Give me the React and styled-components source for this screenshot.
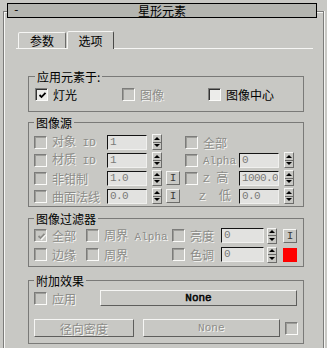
import React from "react";
import styled, { createGlobalStyle } from "styled-components";

const BG = "#c8c8c4";
const CJK = `"Noto Sans CJK SC", "Noto Sans", sans-serif`;
const MONO = `"Liberation Mono", "Noto Sans CJK SC", monospace`;
const LIGHT = "#f6f6f4";
const SHADE = "#6c6c6a";

const GlobalStyle = createGlobalStyle`
  html, body { margin: 0; padding: 0; background: ${BG}; }
  body { font-family: ${CJK}; font-size: 12px; color: #000; }
  * { box-sizing: border-box; }
`;

const Page = styled.div`
  width: 327px;
  height: 348px;
  overflow: hidden;
  background: ${BG};
  padding: 11px 0 0 3px;
`;

const Rollout = styled.div`
  width: 321px;
  height: 360px;
  border: 1px solid #7c7c7a;
  border-bottom: none;
  box-shadow: inset 1px 1px 0 ${LIGHT}, 1px 0 0 ${LIGHT};
`;

const TitleBar = styled.div`
  margin: -9px 0 0 3px;
  width: 310px;
  height: 15px;
  border: 1px solid #000;
  background: #b4b5b0;
  display: grid;
  grid-template-columns: 1fr auto 1fr;
  align-items: center;
  line-height: 13px;
`;

const Collapse = styled.span`
  padding-left: 5px;
  font-family: ${MONO};
  font-size: 11px;
`;

const TabStrip = styled.div`
  margin: 13px 0 0 12px;
  width: 297px;
  height: 18px;
  padding-left: 2px;
  display: flex;
  align-items: flex-end;
  gap: 1px;
  border-bottom: 1px solid ${LIGHT};
`;

const Tab = styled.div`
  width: ${(p) => p.$w}px;
  height: ${(p) => (p.$active ? 18 : 16)}px;
  margin-bottom: ${(p) => (p.$active ? -1 : 0)}px;
  background: ${BG};
  border: 1px solid;
  border-bottom: none;
  border-color: ${LIGHT} ${(p) => (p.$active ? "#4a4a48" : SHADE)} transparent ${LIGHT};
  border-radius: 2px 2px 0 0;
  display: flex;
  align-items: center;
  justify-content: center;
  line-height: 14px;
`;

const Group = styled.fieldset`
  margin: ${(p) => p.$mt}px 0 0 24px;
  width: 276px;
  min-width: 0;
  border: 1px solid #7a7a78;
  padding: ${(p) => p.$pad};
`;

const Caption = styled.legend`
  padding: 0 2px;
  line-height: 13px;
  font-size: 12px;
`;

const Row = styled.div`
  display: grid;
  grid-template-columns: ${(p) => p.$cols};
  height: ${(p) => p.$h}px;
  align-items: center;
  margin-top: ${(p) => p.$mt || 0}px;
`;

const FlexRow = styled.div`
  display: flex;
  align-items: center;
  height: ${(p) => p.$h}px;
  margin-top: ${(p) => p.$mt || 0}px;
`;

const Slot = styled.div`
  grid-column: ${(p) => p.$col};
  display: flex;
  align-items: center;
`;

const Item = styled.label`
  display: flex;
  align-items: center;
  gap: 5px;
  white-space: nowrap;
  padding-left: ${(p) => p.$indent || 0}px;
`;

const Text = styled.span`
  line-height: 13px;
  white-space: pre;
  color: ${(p) => (p.$off ? "#8c8c88" : "#000")};
  text-shadow: ${(p) => (p.$off ? `1px 1px 0 ${LIGHT}` : "none")};
`;

const Latin = styled.span`
  font-family: ${MONO};
  font-size: 11px;
  white-space: pre;
`;

const Box = styled.span`
  width: 13px;
  height: 13px;
  flex: none;
  display: inline-flex;
  align-items: center;
  justify-content: center;
  border: 1px solid;
  border-color: #7c7c7a #fbfbf9 #fbfbf9 #7c7c7a;
  box-shadow: inset 1px 1px 0 ${(p) => (p.$on ? "#333" : "#9c9c98")};
  background: ${(p) => (p.$on ? "#ececea" : BG)};
  margin-left: ${(p) => p.$ml || 0}px;
`;

const CheckBox = ({ on, checked, ml }) => (
  <Box $on={on} $ml={ml}>
    {checked && (
      <svg width="9" height="9" viewBox="0 0 9 9" style={{ marginLeft: 1, marginTop: 1 }}>
        {!on && <path d="M2 4.5 L4 6.5 L8 2" fill="none" stroke={LIGHT} strokeWidth="1.8" transform="translate(0.6 0.6)" />}
        <path d="M1.5 4 L3.5 6 L7.5 1.8" fill="none" stroke={on ? "#000" : "#8c8c88"} strokeWidth="1.8" />
      </svg>
    )}
  </Box>
);

const Field = styled.div`
  width: ${(p) => p.$w}px;
  height: 15px;
  border: 1px solid;
  border-color: #141414 #f0f0ee #f0f0ee #141414;
  background: #e2e2e0;
  font-family: ${MONO};
  font-size: 11px;
  letter-spacing: -0.6px;
  line-height: 13px;
  padding-left: 2px;
  color: #7a7a78;
  white-space: nowrap;
  overflow: hidden;
`;

const Spinner = styled.div`
  width: 10px;
  height: 16px;
  display: flex;
  flex-direction: column;
  border: 1px solid;
  border-color: ${LIGHT} ${SHADE} ${SHADE} ${LIGHT};
`;

const SpinHalf = styled.span`
  flex: 1;
  display: flex;
  align-items: center;
  justify-content: center;
  border-top: ${(p) => (p.$down ? `1px solid ${SHADE}` : "none")};
  &::after {
    content: "";
    border-left: 3px solid transparent;
    border-right: 3px solid transparent;
    ${(p) => (p.$down ? "border-top: 3px solid #000;" : "border-bottom: 3px solid #000;")}
  }
`;

const Spin = () => (
  <Spinner>
    <SpinHalf />
    <SpinHalf $down />
  </Spinner>
);

const IButton = styled.div`
  width: 14px;
  height: 14px;
  border: 1px solid;
  border-color: ${LIGHT} ${SHADE} ${SHADE} ${LIGHT};
  display: flex;
  align-items: center;
  justify-content: center;
  font-family: ${MONO};
  font-size: 11px;
  color: #3a3a3a;
`;

const Swatch = styled.div`
  width: 14px;
  height: 14px;
  background: #ff0000;
`;

const Button = styled.div`
  width: ${(p) => p.$w}px;
  height: ${(p) => p.$h}px;
  margin-left: ${(p) => p.$ml || 0}px;
  border: 1px solid;
  border-color: ${LIGHT} #5e5e5c #5e5e5c ${LIGHT};
  display: flex;
  align-items: center;
  justify-content: center;
  line-height: 13px;
  white-space: pre;
  color: ${(p) => (p.$off ? "#8c8c88" : "#000")};
  text-shadow: ${(p) => (p.$off ? `1px 1px 0 ${LIGHT}` : "none")};
`;

const ButtonLatin = styled(Latin)`
  -webkit-text-stroke: ${(p) => (p.$bold ? "0.5px #000" : "0")};
`;

const SRC_COLS = "73px 45px 14px 19px 54px 45px 10px";
const FLT_COLS = "52px 86px 49px 46px 16px 14px";

export default function App() {
  return (
    <>
      <GlobalStyle />
      <Page>
        <Rollout>
          <TitleBar>
            <Collapse>-</Collapse>
            <span>星形元素</span>
            <span />
          </TitleBar>

          <TabStrip>
            <Tab $w={48}>参数</Tab>
            <Tab $w={47} $active>选项</Tab>
          </TabStrip>

          <Group $mt={21} $pad="5px 6px 10px 6px">
            <Caption>应用元素于:</Caption>
            <Row $cols="87px 86px 1fr" $h={13}>
              <Item><CheckBox on checked /><Text>灯光</Text></Item>
              <Item><CheckBox /><Text $off>图像</Text></Item>
              <Item><CheckBox on /><Text>图像中心</Text></Item>
            </Row>
          </Group>

          <Group $mt={4} $pad="4px 5px 1px 5px">
            <Caption>图像源</Caption>
            <Row $cols={SRC_COLS} $h={18}>
              <Item><CheckBox /><Text $off>对象<Latin> ID</Latin></Text></Item>
              <Field $w={40}>1</Field>
              <Slot $col="3"><Spin /></Slot>
              <Slot $col="5"><Item><CheckBox /><Text $off>全部</Text></Item></Slot>
            </Row>
            <Row $cols={SRC_COLS} $h={18}>
              <Item><CheckBox /><Text $off>材质<Latin> ID</Latin></Text></Item>
              <Field $w={40}>1</Field>
              <Slot $col="3"><Spin /></Slot>
              <Slot $col="5"><Item><CheckBox /><Text $off><Latin>Alpha</Latin></Text></Item></Slot>
              <Slot $col="6"><Field $w={40}>0</Field></Slot>
              <Slot $col="7"><Spin /></Slot>
            </Row>
            <Row $cols={SRC_COLS} $h={18}>
              <Item><CheckBox /><Text $off>非钳制</Text></Item>
              <Field $w={40}>1.0</Field>
              <Slot $col="3"><Spin /></Slot>
              <Slot $col="4"><IButton>I</IButton></Slot>
              <Slot $col="5"><Item><CheckBox /><Text $off><Latin>Z </Latin>高</Text></Item></Slot>
              <Slot $col="6"><Field $w={40}>1000.0</Field></Slot>
              <Slot $col="7"><Spin /></Slot>
            </Row>
            <Row $cols={SRC_COLS} $h={18}>
              <Item><CheckBox /><Text $off>曲面法线</Text></Item>
              <Field $w={40}>0.0</Field>
              <Slot $col="3"><Spin /></Slot>
              <Slot $col="4"><IButton>I</IButton></Slot>
              <Slot $col="5"><Item $indent={14}><Text $off><Latin>Z  </Latin>低</Text></Item></Slot>
              <Slot $col="6"><Field $w={40}>0.0</Field></Slot>
              <Slot $col="7"><Spin /></Slot>
            </Row>
          </Group>

          <Group $mt={5} $pad="1px 5px 2px 5px">
            <Caption>图像过滤器</Caption>
            <Row $cols={FLT_COLS} $h={19}>
              <Item><CheckBox checked /><Text $off>全部</Text></Item>
              <Item><CheckBox /><Text $off>周界<Latin> Alpha</Latin></Text></Item>
              <Item><CheckBox /><Text $off>亮度</Text></Item>
              <Field $w={43}>0</Field>
              <Spin />
              <IButton>I</IButton>
            </Row>
            <Row $cols={FLT_COLS} $h={19}>
              <Item><CheckBox /><Text $off>边缘</Text></Item>
              <Item><CheckBox /><Text $off>周界</Text></Item>
              <Item><CheckBox /><Text $off>色调</Text></Item>
              <Field $w={43}>0</Field>
              <Spin />
              <Swatch />
            </Row>
          </Group>

          <Group $mt={7} $pad="3px 5px 6px 5px">
            <Caption>附加效果</Caption>
            <Row $cols="66px 197px" $h={16}>
              <Item><CheckBox /><Text $off>应用</Text></Item>
              <Button $w={197} $h={16}><ButtonLatin $bold>None</ButtonLatin></Button>
            </Row>
            <FlexRow $h={18} $mt={13}>
              <Button $w={100} $h={18} $off>径向密度</Button>
              <Button $w={138} $h={18} $ml={9} $off><ButtonLatin>None</ButtonLatin></Button>
              <CheckBox ml={5} />
            </FlexRow>
          </Group>
        </Rollout>
      </Page>
    </>
  );
}
